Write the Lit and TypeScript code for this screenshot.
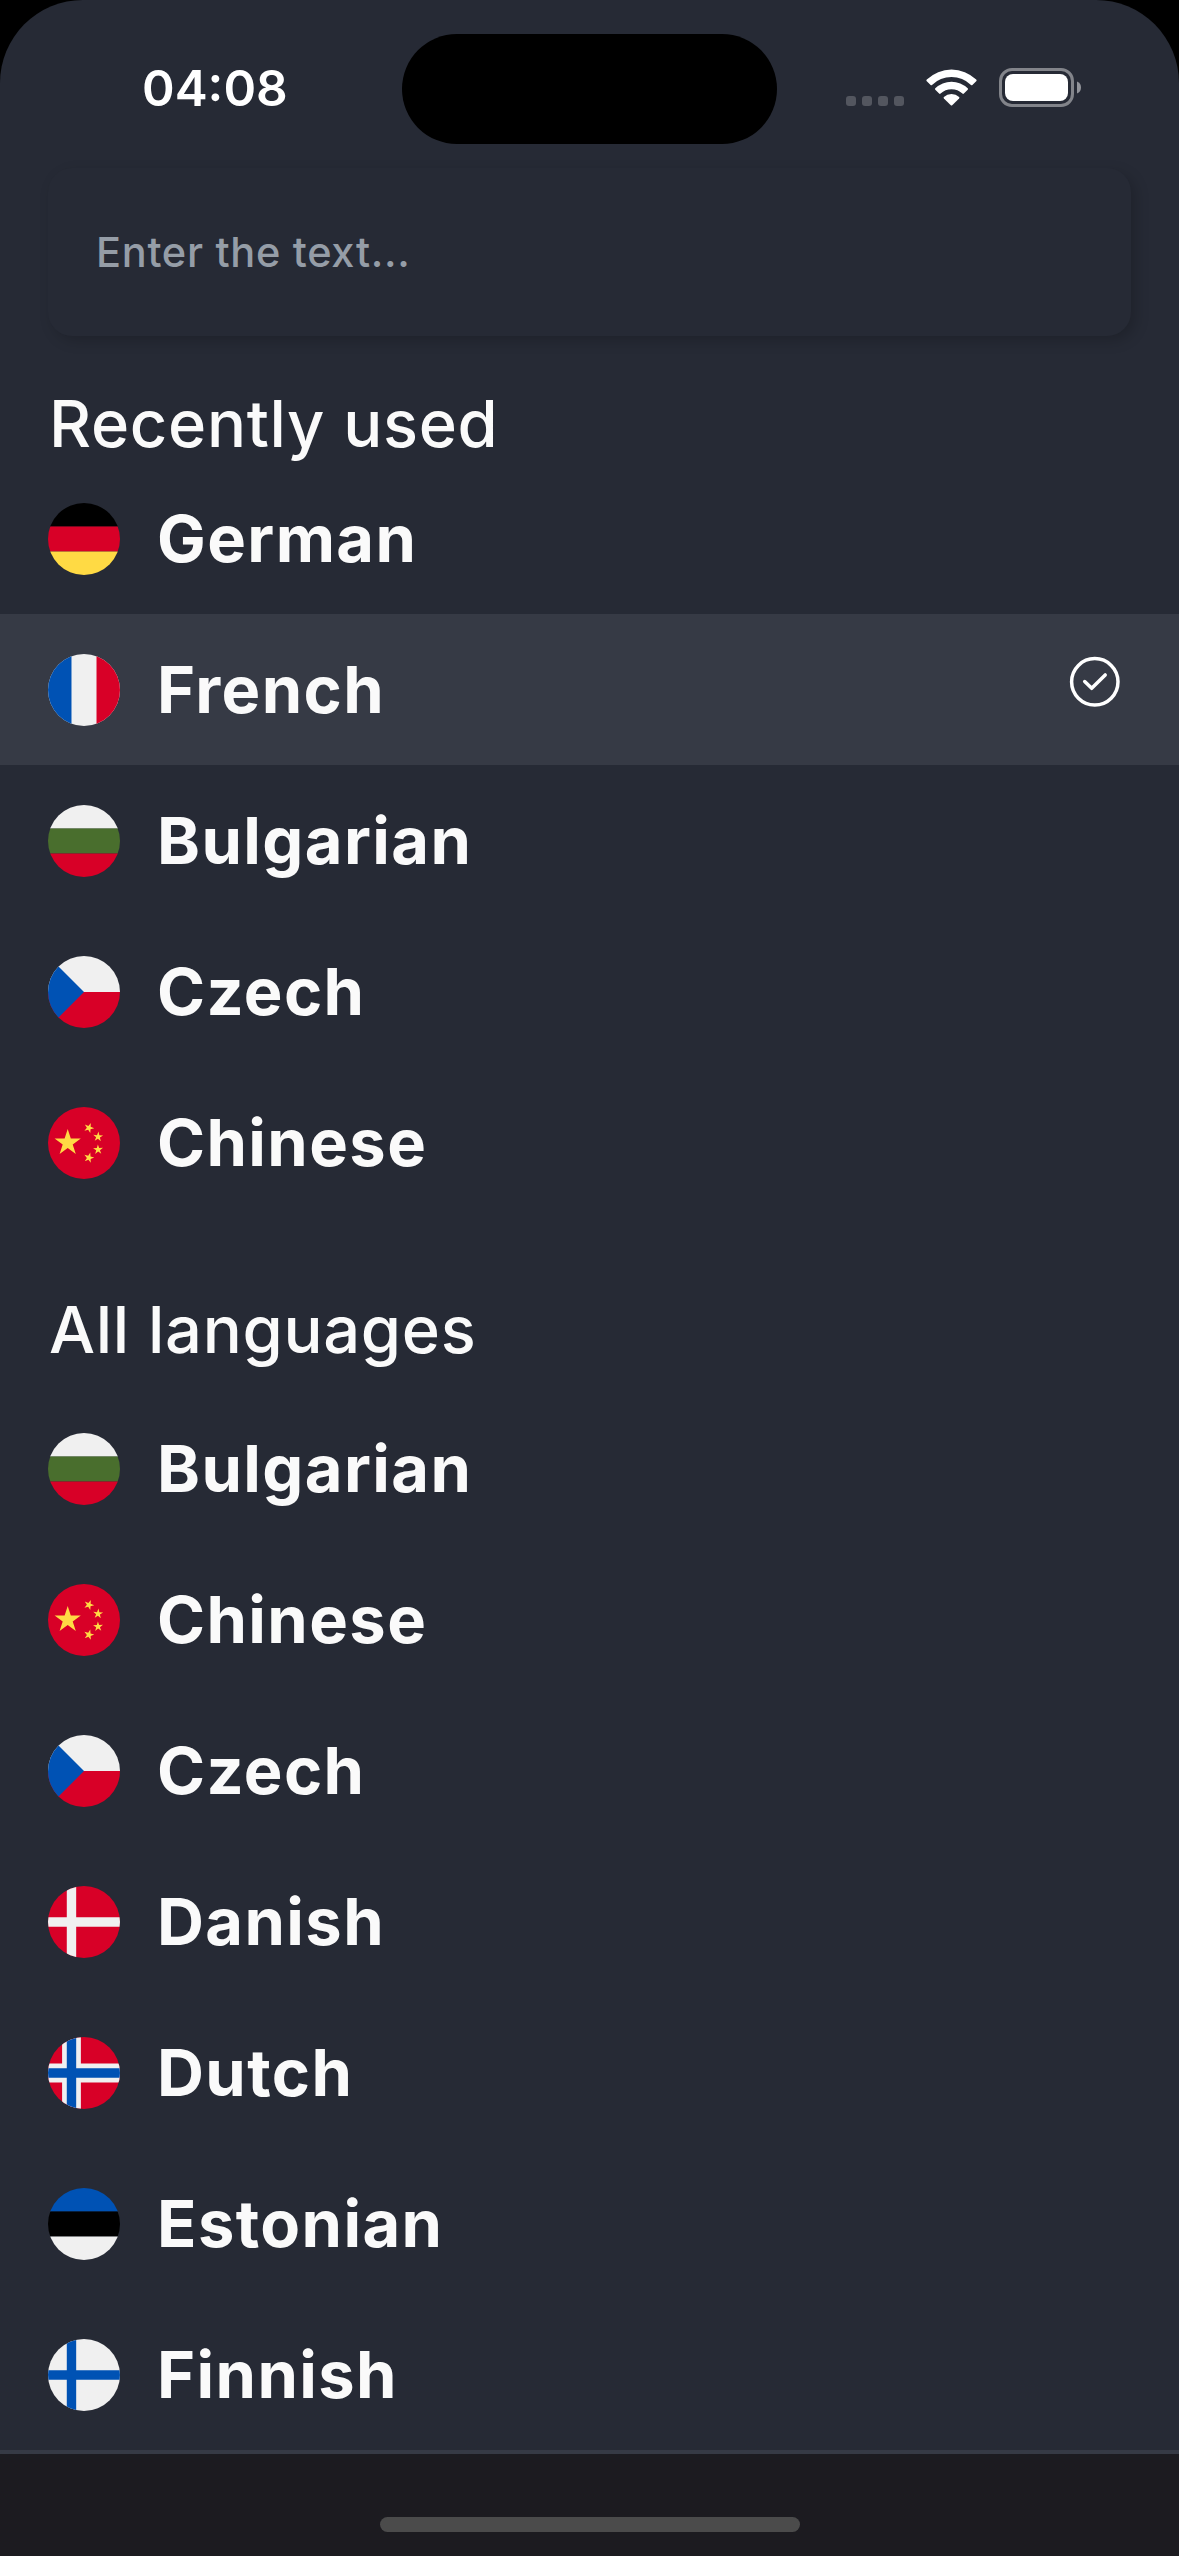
import { LitElement, html, svg, css, nothing } from "lit";
import { customElement, property } from "lit/decorators.js";
import { classMap } from "lit/directives/class-map.js";

type FlagName = "de" | "fr" | "bg" | "cz" | "cn" | "dk" | "no" | "ee" | "fi";

interface Language {
  name: string;
  flag: FlagName;
  selected?: boolean;
}

const WHITE = "#f0f0f0";
const RED = "#d80027";
const BLUE = "#0052b4";
const YELLOW = "#ffda44";

/** Five-pointed star around (cx, cy), turned clockwise by `turn` degrees. */
function star(cx: number, cy: number, r: number, turn = 0) {
  const points = Array.from({ length: 10 }, (_, i) => {
    const angle = ((i * 36 - 90 + turn) * Math.PI) / 180;
    const radius = i % 2 ? r * 0.382 : r;
    return `${(cx + radius * Math.cos(angle)).toFixed(1)},${(cy + radius * Math.sin(angle)).toFixed(1)}`;
  });
  return svg`<polygon fill=${YELLOW} points=${points.join(" ")} />`;
}

/** Three horizontal bands. */
function bands(top: string, middle: string, bottom: string) {
  return svg`
    <rect width="512" height="168" fill=${top} />
    <rect y="167" width="512" height="178" fill=${middle} />
    <rect y="345" width="512" height="167" fill=${bottom} />`;
}

function cross(color: string) {
  return svg`<path fill=${color} d="M133.6 0h66.8v222.6H512v66.8H200.4V512h-66.8V289.4H0v-66.8h133.6z" />`;
}

const flags = {
  de: bands("#000", RED, YELLOW),
  fr: svg`
    <rect width="512" height="512" fill=${WHITE} />
    <rect width="167" height="512" fill=${BLUE} />
    <rect x="345" width="167" height="512" fill=${RED} />`,
  bg: bands(WHITE, "#496e2d", RED),
  cz: svg`
    <rect width="512" height="256" fill=${WHITE} />
    <rect y="256" width="512" height="256" fill=${RED} />
    <path d="M0 0L256 256L0 512z" fill=${BLUE} />`,
  cn: svg`
    <rect width="512" height="512" fill=${RED} />
    ${star(140.1, 255, 98)}
    ${star(291, 149, 38, 21)}
    ${star(356, 212, 37, 4)}
    ${star(356, 303, 37, -2)}
    ${star(291, 361, 38, 15)}`,
  dk: svg`<rect width="512" height="512" fill=${RED} />${cross(WHITE)}`,
  no: svg`
    <rect width="512" height="512" fill=${RED} />
    <path fill=${WHITE} d="M100.2 0h133.6v189.2H512v133.6H233.8V512H100.2V322.8H0V189.2h100.2z" />
    ${cross(BLUE)}`,
  ee: bands(BLUE, "#000", WHITE),
  fi: svg`<rect width="512" height="512" fill=${WHITE} />${cross(BLUE)}`,
};

@customElement("language-row")
class LanguageRow extends LitElement {
  @property({ attribute: false }) language!: Language;

  static styles = css`
    :host {
      display: block;
    }
    .row {
      box-sizing: border-box;
      height: 151px;
      padding: 40px 54px 39px 48px;
      display: flex;
      align-items: flex-start;
      gap: 37px;
    }
    .selected {
      background: #363a45;
    }
    .flag {
      flex: none;
      width: 72px;
      height: 72px;
      border-radius: 50%;
      overflow: hidden;
    }
    .name {
      flex: 1;
      font-size: 65px;
      font-weight: 700;
      line-height: 71px;
      letter-spacing: 1.4px;
      white-space: nowrap;
    }
    .check {
      flex: none;
      width: 60px;
      height: 60px;
      margin-top: -2px;
    }
  `;

  render() {
    const { name, flag, selected } = this.language;
    return html`
      <div class=${classMap({ row: true, selected: !!selected })}>
        <svg class="flag" viewBox="0 0 512 512">${flags[flag]}</svg>
        <span class="name">${name}</span>
        ${selected
          ? html`<svg class="check" viewBox="0 0 60 60" fill="none" stroke="#fff">
              <circle cx="29.8" cy="29.8" r="23.2" stroke-width="3.5" />
              <path
                d="M19.7 29.5L26.7 36.3L40.2 22.9"
                stroke-width="3.5"
                stroke-linecap="round"
                stroke-linejoin="round"
              />
            </svg>`
          : nothing}
      </div>
    `;
  }
}

@customElement("status-bar")
class StatusBar extends LitElement {
  static styles = css`
    :host {
      display: block;
    }
    .bar {
      box-sizing: border-box;
      height: 168px;
      padding: 34px 98px 0 142px;
      display: flex;
      align-items: flex-start;
    }
    .time {
      width: 260px;
      font-size: 49.5px;
      font-weight: 600;
      line-height: 108px;
    }
    .island {
      width: 375px;
      height: 110px;
      border-radius: 55px;
      background: #000;
    }
    .icons {
      flex: 1;
      height: 107px;
      display: flex;
      justify-content: flex-end;
      align-items: center;
      gap: 22px;
    }
    .dots {
      display: flex;
      gap: 6px;
      margin-top: 27px;
    }
    .dot {
      width: 10px;
      height: 10px;
      border-radius: 3px;
      background: #53565f;
    }
    .wifi {
      width: 51px;
      height: 37px;
    }
    .battery {
      width: 82px;
      height: 39px;
    }
  `;

  render() {
    return html`
      <div class="bar">
        <div class="time">04:08</div>
        <div class="island"></div>
        <div class="icons">
          <div class="dots">
            <span class="dot"></span><span class="dot"></span><span class="dot"></span><span class="dot"></span>
          </div>
          <svg class="wifi" viewBox="0 0 51 37" fill="#fff">
            <path d="M.8 10.6A35.5 35.5 0 0 1 50.2 10.6Q51 11.4 50.2 12.2L46.4 15.9Q45.7 16.5 45 15.9A28.2 28.2 0 0 0 6 15.9Q5.3 16.5 4.6 15.9L.8 12.2Q0 11.4 .8 10.6Z" />
            <path d="M9.3 19.3A23.2 23.2 0 0 1 41.7 19.3Q42.4 20 41.7 20.8L37.9 24.6Q37.1 25.2 36.4 24.6A15.7 15.7 0 0 0 14.6 24.6Q13.9 25.2 13.1 24.6L9.3 20.8Q8.6 20 9.3 19.3Z" />
            <path d="M17.9 28A11 11 0 0 1 33.1 28Q33.8 28.8 33.1 29.5L26.2 36.3Q25.5 36.9 24.8 36.3L17.9 29.5Q17.2 28.8 17.9 28Z" />
          </svg>
          <svg class="battery" viewBox="0 0 82 39">
            <rect x="1.5" y="1.5" width="72" height="36" rx="11.5" fill="none" stroke="#82848a" stroke-width="3" />
            <rect x="6" y="6" width="63" height="27" rx="8" fill="#fff" />
            <path d="M78 13.5Q82 15.2 82 19.5Q82 23.8 78 25.5Z" fill="#92949a" />
          </svg>
        </div>
      </div>
    `;
  }
}

@customElement("app-root")
class AppRoot extends LitElement {
  private recent: Language[] = [
    { name: "German", flag: "de" },
    { name: "French", flag: "fr", selected: true },
    { name: "Bulgarian", flag: "bg" },
    { name: "Czech", flag: "cz" },
    { name: "Chinese", flag: "cn" },
  ];

  private all: Language[] = [
    { name: "Bulgarian", flag: "bg" },
    { name: "Chinese", flag: "cn" },
    { name: "Czech", flag: "cz" },
    { name: "Danish", flag: "dk" },
    { name: "Dutch", flag: "no" },
    { name: "Estonian", flag: "ee" },
    { name: "Finnish", flag: "fi" },
  ];

  static styles = css`
    :host {
      display: block;
      width: 1179px;
      height: 2556px;
      background: #000;
      color: #fafafa;
      font-family: Inter, "Liberation Sans", sans-serif;
    }
    .screen {
      height: 100%;
      display: flex;
      flex-direction: column;
      border-radius: 83px 83px 0 0;
      overflow: hidden;
      background: #262a35;
    }
    .status {
      color: #fff;
    }
    .search {
      box-sizing: border-box;
      height: 168px;
      margin: 0 48px;
      padding: 0 48px;
      display: flex;
      align-items: center;
      border-radius: 24px;
      background: #262a35;
      box-shadow: 5px 5px 14px rgba(0, 0, 0, 0.18);
      color: #959da7;
      font-size: 41.5px;
      font-weight: 500;
      line-height: 50px;
      letter-spacing: 0.7px;
    }
    .heading {
      margin: 48px 49px 0;
      font-size: 65px;
      font-weight: 500;
      line-height: 79px;
      letter-spacing: 0.7px;
    }
    .heading-all {
      margin: 72px 49px 24px;
    }
    .footer {
      box-sizing: border-box;
      height: 106px;
      border-top: 4px solid #363a45;
      padding-top: 63px;
      background: #1c1b20;
    }
    .indicator {
      width: 420px;
      height: 15px;
      margin: 0 auto;
      border-radius: 8px;
      background: #4b4b4b;
    }
  `;

  private rows(languages: Language[]) {
    return languages.map((language) => html`<language-row .language=${language}></language-row>`);
  }

  render() {
    return html`
      <div class="screen">
        <status-bar class="status"></status-bar>
        <div class="search">Enter the text...</div>
        <div class="heading">Recently used</div>
        <div>${this.rows(this.recent)}</div>
        <div class="heading heading-all">All languages</div>
        <div>${this.rows(this.all)}</div>
        <div class="footer"><div class="indicator"></div></div>
      </div>
    `;
  }
}
